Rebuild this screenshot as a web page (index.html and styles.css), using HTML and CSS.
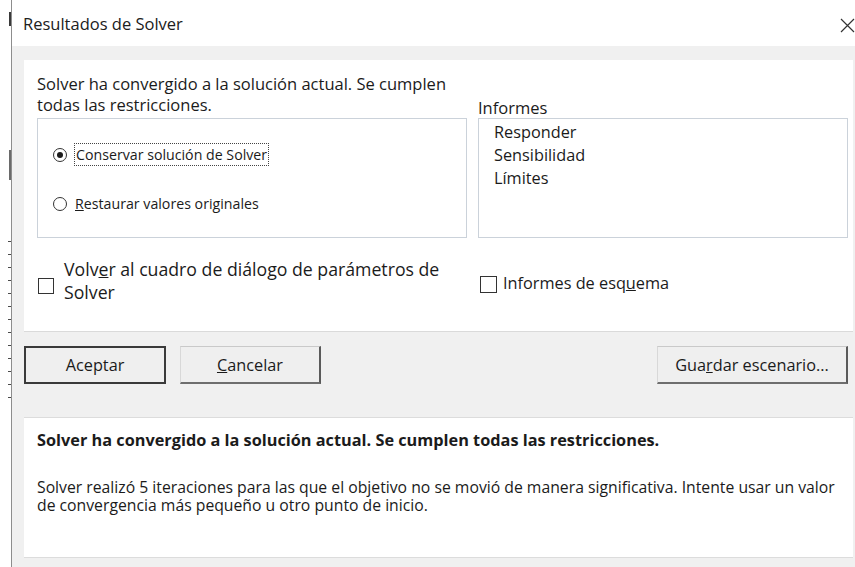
FILE: index.html
```html
<!DOCTYPE html>
<html lang="es">
<head>
<meta charset="utf-8">
<title>Resultados de Solver</title>
<link rel="stylesheet" href="styles.css">
</head>
<body>
<div class="screen">
  <div class="edge"></div>
  <div class="dialog">
    <header class="titlebar">
      <span class="title">Resultados de Solver</span>
      <svg class="close" width="15" height="15" viewBox="0 0 15 15" aria-label="Cerrar">
        <path d="M1 1 L14 14 M14 1 L1 14" stroke="#333" stroke-width="1.2" fill="none"/>
      </svg>
    </header>

    <div class="content">
      <section class="panel">
        <p class="msg">Solver ha convergido a la solución actual. Se cumplen<br>todas las restricciones.</p>
        <div class="list-label">Informes</div>

        <div class="group">
          <label class="radio">
            <span class="dot on"></span>
            <span class="focus">Conservar solución de Solver</span>
          </label>
          <label class="radio">
            <span class="dot"></span>
            <span><u>R</u>estaurar valores originales</span>
          </label>
        </div>

        <ul class="list">
          <li>Responder</li>
          <li>Sensibilidad</li>
          <li>Límites</li>
        </ul>

        <label class="check check-big">
          <span class="box"></span>
          <span>Volv<u>e</u>r al cuadro de diálogo de parámetros de<br>Solver</span>
        </label>
        <label class="check check-small">
          <span class="box"></span>
          <span>Informes de esq<u>u</u>ema</span>
        </label>
      </section>

      <div class="buttons">
        <button class="btn btn-default">Aceptar</button>
        <button class="btn btn-cancel"><u>C</u>ancelar</button>
        <span class="spacer"></span>
        <button class="btn btn-save">Gua<u>r</u>dar escenario...</button>
      </div>

      <section class="details">
        <p class="details-head">Solver ha convergido a la solución actual. Se cumplen todas las restricciones.</p>
        <p class="details-text">Solver realizó 5 iteraciones para las que el objetivo no se movió de manera significativa. Intente usar un valor de convergencia más pequeño u otro punto de inicio.</p>
      </section>
    </div>
  </div>
</div>
</body>
</html>
```

FILE: styles.css
```css
* { box-sizing: border-box; }

html, body {
  margin: 0;
  padding: 0;
  background: #ffffff;
}

body {
  font-family: "Open Sans", "Noto Sans", "Liberation Sans", sans-serif;
  color: #1b1b1b;
}

.screen {
  display: flex;
  width: 855px;
  height: 567px;
  overflow: hidden;
}

/* strip of the spreadsheet window behind the dialog */
.edge {
  width: 12px;
  flex: none;
  border-right: 1px solid #8d8d8d;
  background:
    repeating-linear-gradient(#ffffff 0 11px, #4a4a4a 11px 12px, #ffffff 12px 13px) 8px 230px / 3px 170px no-repeat,
    linear-gradient(#3a3a3a, #3a3a3a) 9px 12px / 2px 14px no-repeat,
    linear-gradient(#6a6a6a, #6a6a6a) 9px 150px / 2px 30px no-repeat,
    linear-gradient(#d23a3a, #d23a3a) 9px 386px / 2px 4px no-repeat,
    #ffffff;
}

.dialog {
  flex: 1;
  display: flex;
  flex-direction: column;
  background: #f0f0f0;
}

.titlebar {
  height: 46px;
  flex: none;
  background: #ffffff;
  display: flex;
  align-items: flex-start;
  justify-content: space-between;
  padding: 13px 0 0 11px;
}

.title {
  font-size: 16.5px;
  line-height: 22px;
  color: #202020;
}

.close {
  margin-top: 5px;
  flex: none;
}

.content {
  padding: 14px 2px 0 12px;
  display: flex;
  flex-direction: column;
}

/* upper white area */
.panel {
  height: 272px;
  background: #ffffff;
  border-bottom: 1px solid #dadada;
  padding: 13px 5px 0 13px;
  display: grid;
  grid-template-columns: 430px 370px;
  grid-template-rows: 43px 120px auto;
  column-gap: 11px;
  row-gap: 2px;
  align-items: start;
}

.msg {
  margin: 0;
  font-size: 16.5px;
  line-height: 21px;
  white-space: nowrap;
}

.list-label {
  align-self: end;
  font-size: 16.5px;
  line-height: 21px;
  margin-bottom: -2px;
}

.group {
  height: 120px;
  border: 1px solid #cbd2da;
  display: flex;
  flex-direction: column;
  padding: 25px 0 0 15px;
  gap: 28px;
}

.radio {
  display: flex;
  align-items: center;
  font-size: 14.2px;
  line-height: 21px;
}

.dot {
  width: 14px;
  height: 14px;
  border: 1.5px solid #333;
  border-radius: 50%;
  margin-right: 8px;
  flex: none;
  display: flex;
  align-items: center;
  justify-content: center;
}

.dot.on::after {
  content: "";
  width: 6px;
  height: 6px;
  border-radius: 50%;
  background: #1b1b1b;
}

.focus {
  outline: 1px dotted #444;
  outline-offset: 0;
  padding: 0 1px;
}

.list {
  height: 120px;
  margin: 0;
  list-style: none;
  border: 1px solid #cbd2da;
  padding: 2px 0 0 15px;
  font-size: 16.3px;
  line-height: 23px;
}

.check {
  display: flex;
  align-items: flex-start;
}

.box {
  flex: none;
  border: 1.5px solid #333;
  background: #ffffff;
}

.check-big {
  margin-top: 18px;
  font-size: 17.7px;
  line-height: 23px;
  white-space: nowrap;
}

.check-big .box {
  width: 16px;
  height: 16px;
  margin: 20px 10px 0 1px;
}

.check-small {
  margin-top: 33px;
  font-size: 16.3px;
  line-height: 21px;
}

.check-small .box {
  width: 17px;
  height: 17px;
  margin: 3px 6px 0 2px;
}

/* command buttons */
.buttons {
  display: flex;
  margin-top: 14px;
  height: 38px;
  padding-right: 5px;
}

.spacer { flex: 1; }

.btn {
  font-family: inherit;
  font-size: 16.3px;
  color: #1b1b1b;
  background: #efefef;
  height: 38px;
  padding: 0;
  margin: 0;
  border-style: solid;
}

.btn-default {
  width: 142px;
  border-width: 2px;
  border-color: #3a3a3a;
}

.btn-cancel,
.btn-save {
  border-width: 1px 2px 2px 1px;
  border-color: #c9c9c9 #5a5a5a #6e6e6e #d8d8d8;
}

.btn-cancel {
  width: 141px;
  margin-left: 14px;
}

.btn-save {
  width: 191px;
}

/* lower message area */
.details {
  margin-top: 33px;
  height: 141px;
  background: #ffffff;
  border-top: 1px solid #dcdcdc;
  border-bottom: 1px solid #dcdcdc;
  padding: 12px 12px 0 13px;
}

.details-head {
  margin: 0;
  font-size: 16.3px;
  line-height: 20px;
  font-weight: 700;
  white-space: nowrap;
}

.details-text {
  margin: 28px 0 0;
  font-size: 15.75px;
  line-height: 18px;
}
```
